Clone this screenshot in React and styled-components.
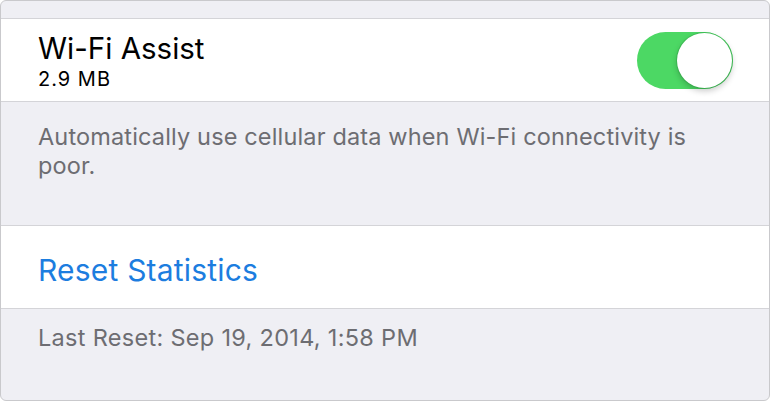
import React from "react";
import styled, { createGlobalStyle } from "styled-components";

const GlobalStyle = createGlobalStyle`
  html, body {
    margin: 0;
    padding: 0;
    background: #ffffff;
  }
  * {
    box-sizing: border-box;
  }
`;

const Frame = styled.div`
  width: 770px;
  height: 401px;
  border: 1px solid #c9c9cc;
  border-radius: 6px;
  background: #efeff4;
  overflow: hidden;
  display: flex;
  flex-direction: column;
  font-family: Inter, "Liberation Sans", Arial, sans-serif;
`;

const Spacer = styled.div`
  height: ${(p) => p.h}px;
  flex: none;
`;

const Cell = styled.div`
  height: ${(p) => p.h}px;
  flex: none;
  background: #ffffff;
  border-top: 1px solid #d4d4d8;
  border-bottom: 1px solid #d4d4d8;
  display: flex;
  align-items: center;
  justify-content: space-between;
  padding: 0 36px 0 37px;
`;

const Labels = styled.div`
  display: flex;
  flex-direction: column;
  margin-top: 3px;
`;

const Title = styled.div`
  font-size: 29.5px;
  line-height: 32px;
  color: #000000;
`;

const Detail = styled.div`
  font-size: 20px;
  line-height: 24px;
  letter-spacing: 1px;
  margin-top: 3px;
  color: #000000;
`;

const Action = styled.div`
  font-size: 30px;
  letter-spacing: 0.2px;
  color: #1c7ddf;
  margin-top: 6px;
`;

const Footer = styled.div`
  padding: ${(p) => p.pad};
  font-size: 23.5px;
  line-height: 29px;
  letter-spacing: ${(p) => p.ls || "0.15px"};
  color: #6d6d72;
  flex: ${(p) => (p.grow ? "1" : "none")};
  height: ${(p) => (p.h ? `${p.h}px` : "auto")};
`;

const Track = styled.div`
  width: 96px;
  height: 57px;
  border-radius: 29px;
  background: #4cd864;
  position: relative;
  flex: none;
`;

const Knob = styled.div`
  position: absolute;
  top: 1px;
  right: 1px;
  width: 55px;
  height: 55px;
  border-radius: 50%;
  background: #ffffff;
  box-shadow: 0 0 0 1px rgba(40, 150, 60, 0.35), 0 3px 6px rgba(0, 0, 0, 0.22);
`;

const Toggle = () => (
  <Track>
    <Knob />
  </Track>
);

export default function App() {
  return (
    <>
      <GlobalStyle />
      <Frame>
        <Spacer h={17} />
        <Cell h={84}>
          <Labels>
            <Title>Wi-Fi Assist</Title>
            <Detail>2.9 MB</Detail>
          </Labels>
          <Toggle />
        </Cell>
        <Footer h={123} pad="20px 40px 0 37px">
          Automatically use cellular data when Wi-Fi connectivity is poor.
        </Footer>
        <Cell h={84}>
          <Action>Reset Statistics</Action>
        </Cell>
        <Footer grow pad="14px 40px 0 37px" ls="0.3px">
          Last Reset: Sep 19, 2014, 1:58 PM
        </Footer>
      </Frame>
    </>
  );
}
